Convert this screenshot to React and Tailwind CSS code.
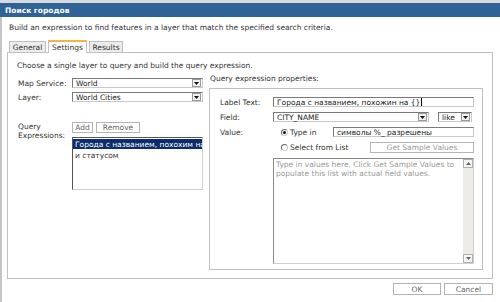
import React from 'react';

const Arrow = () => (
  <span className="w-[9px] h-[8px] mr-[1px] border border-[#9a9a9a] bg-[#f0f0ee] flex items-center justify-center shrink-0">
    <svg width="5" height="3" viewBox="0 0 5 3"><path d="M0 0h5L2.5 3z" fill="#111" /></svg>
  </span>
);

const Select = ({ value, className = '' }) => (
  <div className={`h-[10px] border border-[#7a7a7a] border-r-[#c8c8c8] border-b-[#c8c8c8] bg-white flex items-center justify-between pl-[3px] ${className}`}>
    <span className="text-[#222]">{value}</span>
    <Arrow />
  </div>
);

const Btn = ({ children, className = '' }) => (
  <div className={`h-[11px] border border-[#b4b4b4] bg-white flex items-center justify-center text-[#666] ${className}`}>
    {children}
  </div>
);

const Radio = ({ checked }) => (
  <span className="w-[7px] h-[7px] rounded-full border border-[#666] border-b-[#ccc] border-r-[#ccc] bg-white flex items-center justify-center shrink-0">
    {checked && <span className="w-[3px] h-[3px] rounded-full bg-[#111]" />}
  </span>
);

export default function App() {
  return (
    <div className="w-[500px] h-[302px] bg-white overflow-hidden text-[7.5px] leading-[9px] text-[#333]" style={{ fontFamily: '"DejaVu Sans", sans-serif' }}>
      <div className="h-[3px] bg-[#d6dbe0]" />
      <div className="h-[14px] bg-[#2f6397] pl-[5px] flex items-center text-white font-bold text-[7.5px]">Поиск городов</div>
      <div className="h-[285px] border-l-2 border-[#c4c4c4] pl-[5px]">
        <div className="pt-[6px] pl-[2px] h-[15px]">Build an expression to find features in a layer that match the specified search criteria.</div>
        <div className="mt-[7px] h-[13px] pl-[2px] flex items-end gap-[2px]">
          <div className="h-[11px] w-[37px] border border-b-0 border-[#c0c0c0] bg-[#ececec] flex items-center justify-center">General</div>
          <div className="h-[13px] w-[39px] border border-b-0 border-[#c0c0c0] border-t-2 border-t-[#f2b544] bg-white flex items-center justify-center -mb-px relative">Settings</div>
          <div className="h-[11px] w-[34px] border border-b-0 border-[#c0c0c0] bg-[#ececec] flex items-center justify-center">Results</div>
        </div>
        <div className="w-[486px] h-[227px] border border-[#c0c0c0] pl-[9px] pt-[8px]">
          <div className="h-[9px]">Choose a single layer to query and build the query expression.</div>
          <div className="flex mt-[2px]">
            <div className="w-[192px] pl-[1px]">
              <div className="mt-[6px] flex items-center">
                <span className="w-[54px]">Map Service:</span>
                <Select value="World" className="w-[131px]" />
              </div>
              <div className="mt-[4px] flex items-center">
                <span className="w-[54px]">Layer:</span>
                <Select value="World Cities" className="w-[131px]" />
              </div>
              <div className="mt-[20px] flex">
                <div className="w-[54px] leading-[9px]">Query<br />Expressions:</div>
                <div>
                  <div className="flex gap-[3px]">
                    <Btn className="w-[21px]">Add</Btn>
                    <Btn className="w-[44px]">Remove</Btn>
                  </div>
                  <div className="mt-[4px] w-[131px] h-[53px] border border-[#555] border-r-[#d0d0d0] border-b-[#d0d0d0] bg-white overflow-hidden whitespace-nowrap">
                    <div className="h-[10px] mt-px bg-[#0c2c6e] text-white pl-[2px] flex items-center">Города с названием, похохим на</div>
                    <div className="pl-[2px] mt-[2px]">и статусом</div>
                  </div>
                </div>
              </div>
            </div>
            <div>
              <div className="mt-[2px] h-[9px] pl-[1px]">Query expression properties:</div>
              <div className="mt-[5px] w-[274px] h-[182px] border border-[#c0c0c0] pl-[10px] pr-[8px] pt-[8px]">
                <div className="flex items-center">
                  <span className="w-[53px]">Label Text:</span>
                  <div className="h-[10px] flex-1 border border-[#7a7a7a] border-r-[#c8c8c8] border-b-[#c8c8c8] pl-[3px] flex items-center whitespace-nowrap text-[#222]">
                    Города с названием, похожин на {'{}'}<span className="w-px h-[8px] bg-black ml-px" />
                  </div>
                </div>
                <div className="mt-[5px] flex items-center">
                  <span className="w-[53px]">Field:</span>
                  <Select value="CITY_NAME" className="w-[156px]" />
                  <Select value="like" className="w-[34px] ml-[9px]" />
                </div>
                <div className="mt-[5px] flex items-center">
                  <span className="w-[61px]">Value:</span>
                  <Radio checked />
                  <span className="ml-[2px] w-[43px]">Type in</span>
                  <div className="h-[10px] flex-1 border border-[#7a7a7a] border-r-[#c8c8c8] border-b-[#c8c8c8] pl-[3px] flex items-center text-[#222]">символы %_ разрешены</div>
                </div>
                <div className="mt-[5px] flex items-center">
                  <span className="w-[61px]" />
                  <Radio />
                  <span className="ml-[2px] w-[80px]">Select from List</span>
                  <Btn className="flex-1 h-[10px] text-[#999]">Get Sample Values</Btn>
                </div>
                <div className="mt-[5px] ml-[53px] h-[106px] border border-[#8a8a8a] border-r-[#d0d0d0] border-b-[#d0d0d0] flex">
                  <div className="flex-1 pl-[2px] pt-px text-[#999]">Type in values here. Click Get Sample Values to populate this list with actual field values.</div>
                  <div className="w-[10px] bg-[#ecebe6] flex flex-col justify-between">
                    <div className="h-[9px] border border-[#b0b0b0] bg-[#f4f4f2] flex items-center justify-center">
                      <svg width="5" height="3" viewBox="0 0 5 3"><path d="M0 3h5L2.5 0z" fill="#666" /></svg>
                    </div>
                    <div className="h-[9px] border border-[#b0b0b0] bg-[#f4f4f2] flex items-center justify-center">
                      <svg width="5" height="3" viewBox="0 0 5 3"><path d="M0 0h5L2.5 3z" fill="#666" /></svg>
                    </div>
                  </div>
                </div>
              </div>
            </div>
          </div>
        </div>
        <div className="w-[486px] mt-[4px] flex justify-end gap-[3px]">
          <Btn className="w-[48px] h-[12px] text-[#555]">OK</Btn>
          <Btn className="w-[49px] h-[12px] text-[#555]">Cancel</Btn>
        </div>
      </div>
    </div>
  );
}
